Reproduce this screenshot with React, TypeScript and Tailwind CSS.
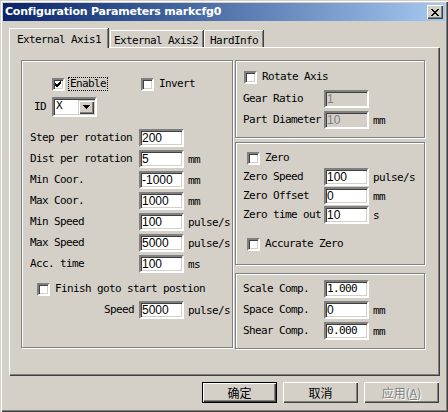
import type { ReactNode } from "react";

const MONO = "font-['DejaVu_Sans_Mono',monospace] text-[11px] tracking-[-0.62px]";
const SANS = "font-['Liberation_Sans',Arial,sans-serif] text-[12px] tracking-normal";

// Sunken edit box
function Field({
	value,
	disabled,
	mono,
}: {
	value: string;
	disabled?: boolean;
	mono?: boolean;
}) {
	return (
		<div
			className={`h-[18px] w-[45px] shrink-0 border-2 border-t-[#808080] border-l-[#808080] border-b-white border-r-white shadow-[inset_1px_1px_0_#404040,inset_-1px_-1px_0_#d4d0c8] pl-[1px] leading-[14px] ${
				disabled ? "bg-[#d4d0c8] text-[#808080]" : "bg-white text-black"
			} ${mono ? MONO : SANS}`}
		>
			{value}
		</div>
	);
}

function CheckBox({ checked }: { checked?: boolean }) {
	return (
		<div className="flex h-[13px] w-[13px] shrink-0 items-center justify-center border-2 border-t-[#808080] border-l-[#808080] border-b-white border-r-white bg-white shadow-[inset_1px_1px_0_#404040,inset_-1px_-1px_0_#d4d0c8]">
			{checked && (
				<svg width="7" height="7" viewBox="0 0 7 7">
					<path
						d="M0 2 L2 4 L6 0 M0 3 L2 5 L6 1 M0 4 L2 6 L6 2"
						stroke="#000"
						strokeWidth="1"
						fill="none"
						shapeRendering="crispEdges"
					/>
				</svg>
			)}
		</div>
	);
}

// Etched group frame
function Group({
	className,
	children,
}: {
	className: string;
	children: ReactNode;
}) {
	return (
		<div
			className={`border border-[#808080] shadow-[inset_1px_1px_0_#fff,1px_1px_0_#fff] ${className}`}
		>
			{children}
		</div>
	);
}

function Row({
	label,
	value,
	unit,
	labelW,
	mono,
	disabled,
}: {
	label: string;
	value: string;
	unit?: string;
	labelW: string;
	mono?: boolean;
	disabled?: boolean;
}) {
	return (
		<div className="flex h-[18px] items-center">
			<div className={`${labelW} shrink-0 whitespace-pre`}>{label}</div>
			<Field value={value} mono={mono} disabled={disabled} />
			{unit && <div className="ml-[4px] mt-[2px]">{unit}</div>}
		</div>
	);
}

function Button({
	children,
	isDefault,
}: {
	children: ReactNode;
	isDefault?: boolean;
}) {
	return (
		<div
			className={`flex h-[21px] w-[75px] items-center justify-center bg-[#d4d0c8] font-['Noto_Sans_CJK_SC',sans-serif] text-[12px] tracking-normal ${
				isDefault
					? "border border-black shadow-[inset_1px_1px_0_#fff,inset_-1px_-1px_0_#404040,inset_-2px_-2px_0_#808080]"
					: "shadow-[inset_1px_1px_0_#fff,inset_-1px_-1px_0_#404040,inset_-2px_-2px_0_#808080]"
			}`}
		>
			{children}
		</div>
	);
}

export default function App() {
	return (
		<div
			className={`flex h-[412px] w-[448px] flex-col bg-[#d4d0c8] p-[3px] text-black shadow-[inset_1px_1px_0_#d4d0c8,inset_2px_2px_0_#fff,inset_-1px_-1px_0_#404040,inset_-2px_-2px_0_#808080] ${MONO}`}
		>
			{/* Title bar */}
			<div className="flex h-[18px] shrink-0 items-center justify-between bg-gradient-to-r from-[#0a246a] to-[#a6caf0] pl-[2px] pr-[2px]">
				<span className="font-['DejaVu_Sans',sans-serif] text-[11px] font-bold tracking-[-0.2px] text-white">
					Configuration Parameters markcfg0
				</span>
				<div className="flex h-[14px] w-[16px] items-center justify-center bg-[#d4d0c8] shadow-[inset_1px_1px_0_#fff,inset_-1px_-1px_0_#404040,inset_-2px_-2px_0_#808080]">
					<svg width="8" height="7" viewBox="0 0 8 7" shapeRendering="crispEdges">
						<path
							d="M0 0h2v1h-2zM6 0h2v1h-2zM1 1h2v1h-2zM5 1h2v1h-2zM2 2h4v1h-4zM3 3h2v1h-2zM2 4h4v1h-4zM1 5h2v1h-2zM5 5h2v1h-2zM0 6h2v1h-2zM6 6h2v1h-2z"
							fill="#000"
						/>
					</svg>
				</div>
			</div>

			<div className="px-[6px]">
				{/* Tabs */}
				<div className="mt-[7px] flex h-[19px] items-end">
					<div className="relative z-10 -mb-[1px] flex h-[20px] w-[99px] items-start border-l border-t border-white pl-[7px] pt-[3px] shadow-[inset_-1px_0_0_#808080,1px_0_0_#404040] bg-[#d4d0c8]">
						External Axis1
					</div>
					<div className="ml-[2px] flex h-[17px] w-[93px] items-start border-l border-t border-white pl-[3px] pt-[2px] shadow-[inset_-1px_0_0_#808080,1px_0_0_#404040]">
						External Axis2
					</div>
					<div className="ml-[1px] flex h-[17px] w-[59px] items-start border-l border-t border-white pl-[5px] pt-[2px] shadow-[inset_-1px_0_0_#808080,1px_0_0_#404040]">
						HardInfo
					</div>
				</div>

				{/* Tab panel */}
				<div className="flex h-[328px] w-[430px] border-l border-t border-white pl-[11px] pt-[12px] shadow-[inset_-1px_-1px_0_#808080,1px_1px_0_#404040]">
					{/* Left group */}
					<Group className="h-[288px] w-[212px] shrink-0 pl-[8px]">
						<div className="mt-[16px] flex h-[14px] items-center">
							<div className="ml-[22px]">
								<CheckBox checked />
							</div>
							<div className="ml-[3px] border border-dotted border-black px-[1px] leading-[12px]">
								Enable
							</div>
							<div className="ml-[33px]">
								<CheckBox />
							</div>
							<div className="ml-[5px]">Invert</div>
						</div>
						<div className="mt-[6px] flex h-[20px] items-center">
							<div className="ml-[4px] w-[18px]">ID</div>
							<div className="flex h-[20px] w-[45px] border-2 border-t-[#808080] border-l-[#808080] border-b-white border-r-white bg-white shadow-[inset_1px_1px_0_#404040,inset_-1px_-1px_0_#d4d0c8]">
								<div className="flex-1 pl-[2px] leading-[13px]">X</div>
								<div className="my-[1px] mr-[1px] flex w-[16px] items-center justify-center bg-[#d4d0c8] shadow-[inset_1px_1px_0_#d4d0c8,inset_2px_2px_0_#fff,inset_-1px_-1px_0_#404040,inset_-2px_-2px_0_#808080]">
									<svg width="7" height="4" viewBox="0 0 7 4" shapeRendering="crispEdges">
										<path d="M0 0h7v1h-7zM1 1h5v1h-5zM2 2h3v1h-3zM3 3h1v1h-1z" fill="#000" />
									</svg>
								</div>
							</div>
						</div>
						<div className="mt-[12px] flex flex-col gap-[3px]">
							<Row label="Step per rotation" value="200" labelW="w-[109px]" />
							<Row label="Dist per rotation" value="5" unit="mm" labelW="w-[109px]" />
							<Row label="Min Coor." value="-1000" unit="mm" labelW="w-[109px]" />
							<Row label="Max Coor." value="1000" unit="mm" labelW="w-[109px]" />
							<Row label="Min Speed" value="100" unit="pulse/s" labelW="w-[109px]" />
							<Row label="Max Speed" value="5000" unit="pulse/s" labelW="w-[109px]" />
							<Row label="Acc. time" value="100" unit="ms" labelW="w-[109px]" />
						</div>
						<div className="mt-[10px] flex h-[13px] items-center">
							<div className="ml-[7px]">
								<CheckBox />
							</div>
							<div className="ml-[5px]">Finish goto start postion</div>
						</div>
						<div className="mt-[5px] flex h-[18px] items-center">
							<div className="w-[109px] pr-[5px] text-right">Speed</div>
							<Field value="5000" />
							<div className="ml-[4px] mt-[2px]">pulse/s</div>
						</div>
					</Group>

					{/* Right column */}
					<div className="ml-[2px] flex w-[190px] shrink-0 flex-col">
						<Group className="h-[78px] pl-[7px]">
							<div className="mt-[10px] flex h-[13px] items-center">
								<div className="ml-[1px]">
									<CheckBox />
								</div>
								<div className="ml-[5px]">Rotate Axis</div>
							</div>
							<div className="mt-[6px] flex flex-col gap-[3px]">
								<Row label="Gear Ratio" value="1" labelW="w-[81px]" disabled />
								<Row label="Part Diameter" value="10" unit="mm" labelW="w-[81px]" disabled />
							</div>
						</Group>

						<Group className="mt-[4px] h-[123px] pl-[7px]">
							<div className="mt-[9px] flex h-[13px] items-center">
								<div className="ml-[4px]">
									<CheckBox />
								</div>
								<div className="ml-[5px]">Zero</div>
							</div>
							<div className="mt-[3px] flex flex-col gap-[1px]">
								<Row label="Zero Speed" value="100" unit="pulse/s" labelW="w-[81px]" />
								<Row label="Zero Offset" value="0" unit="mm" labelW="w-[81px]" />
								<Row label="Zero time out" value="10" unit="s" labelW="w-[81px]" />
							</div>
							<div className="mt-[14px] flex h-[13px] items-center">
								<div className="ml-[4px]">
									<CheckBox />
								</div>
								<div className="ml-[5px]">Accurate Zero</div>
							</div>
						</Group>

						<Group className="mt-[8px] h-[76px] pl-[7px]">
							<div className="mt-[6px] flex flex-col gap-[3px]">
								<Row label="Scale Comp." value="1.000" labelW="w-[81px]" mono />
								<Row label="Space Comp." value="0" unit="mm" labelW="w-[81px]" />
								<Row label="Shear Comp." value="0.000" unit="mm" labelW="w-[81px]" mono />
							</div>
						</Group>
					</div>
				</div>

				{/* Dialog buttons */}
				<div className="mt-[7px] flex justify-end gap-[6px] pr-[0px]">
					<Button isDefault>确定</Button>
					<Button>取消</Button>
					<Button>
						<span className="text-[#808080] [text-shadow:1px_1px_0_#fff]">
							应用(<span className="underline">A</span>)
						</span>
					</Button>
				</div>
			</div>
		</div>
	);
}
